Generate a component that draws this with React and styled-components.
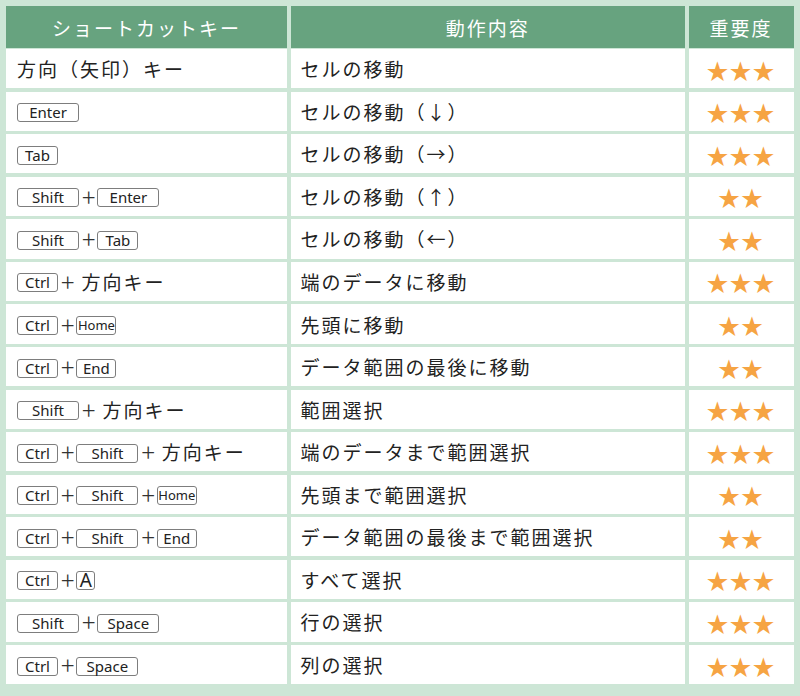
import React from "react";
import styled, { createGlobalStyle } from "styled-components";

const GlobalStyle = createGlobalStyle`
  html, body {
    margin: 0;
    padding: 0;
    background: #cde6d6;
  }
  body {
    font-family: "Noto Sans CJK JP", "Noto Sans", sans-serif;
  }
`;

const Page = styled.div`
  width: 800px;
  height: 696px;
  box-sizing: border-box;
  padding: 6px 7px 0 6px;
  background: #cde6d6;
  display: flex;
  flex-direction: column;
  gap: 1px;
`;

const Grid = styled.div`
  display: grid;
  grid-template-columns: 281px 394.5px 105px;
  column-gap: 3.5px;
  row-gap: 3.27px;
  grid-auto-rows: ${(props) => props.rowHeight};
`;

const HeadCell = styled.div`
  background: #67a37f;
  color: #ffffff;
  font-size: 19px;
  letter-spacing: 2px;
  display: flex;
  align-items: center;
  justify-content: center;
`;

const Cell = styled.div`
  background: #ffffff;
  color: #222222;
  font-size: 19px;
  letter-spacing: 2px;
  display: flex;
  align-items: center;
  justify-content: ${(props) => (props.center ? "center" : "flex-start")};
  padding-left: ${(props) => (props.center ? "0" : props.pad)};
`;

const Key = styled.span`
  display: inline-flex;
  align-items: center;
  justify-content: center;
  box-sizing: border-box;
  width: ${(props) => props.w}px;
  height: 19px;
  margin-top: 3px;
  border: 1px solid #7d7d7d;
  border-radius: 3px;
  font-family: "Noto Sans", sans-serif;
  font-weight: 400;
  font-size: ${(props) => props.size || 15}px;
  letter-spacing: 0;
  color: #222222;
  line-height: 1;
`;

const Plus = styled.span`
  font-family: "Noto Sans CJK JP", sans-serif;
  font-weight: 300;
  font-size: 25px;
  letter-spacing: 0;
  margin: 0 2px 0 3px;
  line-height: 1;
  color: #333333;
`;

const Tail = styled.span`
  margin-left: 5px;
`;

const Stars = styled.span`
  color: #f6a443;
  font-size: 22px;
  letter-spacing: 1px;
  font-family: "Noto Sans CJK JP", sans-serif;
`;

const keyWidths = {
  Ctrl: 41,
  Tab: 41,
  Home: 40,
  End: 40,
  Shift: 62,
  Enter: 62,
  Space: 62,
  A: 19,
};

const keySizes = {
  Home: 13,
  A: 19,
};

const rows = [
  { keys: [], text: "方向（矢印）キー", action: "セルの移動", stars: 3 },
  { keys: ["Enter"], action: "セルの移動（↓）", stars: 3 },
  { keys: ["Tab"], action: "セルの移動（→）", stars: 3 },
  { keys: ["Shift", "Enter"], action: "セルの移動（↑）", stars: 2 },
  { keys: ["Shift", "Tab"], action: "セルの移動（←）", stars: 2 },
  { keys: ["Ctrl"], text: "方向キー", action: "端のデータに移動", stars: 3 },
  { keys: ["Ctrl", "Home"], action: "先頭に移動", stars: 2 },
  { keys: ["Ctrl", "End"], action: "データ範囲の最後に移動", stars: 2 },
  { keys: ["Shift"], text: "方向キー", action: "範囲選択", stars: 3 },
  { keys: ["Ctrl", "Shift"], text: "方向キー", action: "端のデータまで範囲選択", stars: 3 },
  { keys: ["Ctrl", "Shift", "Home"], action: "先頭まで範囲選択", stars: 2 },
  { keys: ["Ctrl", "Shift", "End"], action: "データ範囲の最後まで範囲選択", stars: 2 },
  { keys: ["Ctrl", "A"], action: "すべて選択", stars: 3 },
  { keys: ["Shift", "Space"], action: "行の選択", stars: 3 },
  { keys: ["Ctrl", "Space"], action: "列の選択", stars: 3 },
];

function Shortcut({ keys, text }) {
  if (keys.length === 0) return <>{text}</>;
  return (
    <>
      {keys.map((k, i) => (
        <React.Fragment key={k + i}>
          {i > 0 && <Plus>+</Plus>}
          <Key w={keyWidths[k]} size={keySizes[k]}>
            {k}
          </Key>
        </React.Fragment>
      ))}
      {text && (
        <>
          <Plus>+</Plus>
          <Tail>{text}</Tail>
        </>
      )}
    </>
  );
}

export default function App() {
  return (
    <>
      <GlobalStyle />
      <Page>
        <Grid rowHeight="42px">
          <HeadCell>ショートカットキー</HeadCell>
          <HeadCell>動作内容</HeadCell>
          <HeadCell>重要度</HeadCell>
        </Grid>
        <Grid rowHeight="39.3px">
          {rows.map((row, i) => (
            <React.Fragment key={i}>
              <Cell pad="11px">
                <Shortcut keys={row.keys} text={row.text} />
              </Cell>
              <Cell pad="10px">{row.action}</Cell>
              <Cell center>
                <Stars>{"★".repeat(row.stars)}</Stars>
              </Cell>
            </React.Fragment>
          ))}
        </Grid>
      </Page>
    </>
  );
}
